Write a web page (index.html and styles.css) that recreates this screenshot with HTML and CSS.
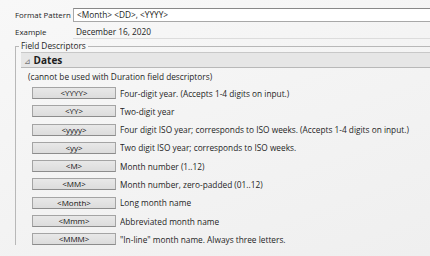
FILE: index.html
```html
<!DOCTYPE html>
<html>
<head>
    <title>Format Pattern</title>
    <meta name="viewport" content="width=device-width, initial-scale=1">
    <link rel="stylesheet" href="styles.css">
</head>
<body>
    <div class="top">
        <div class="label">Format Pattern</div>
        <div class="input">&lt;Month&gt; &lt;DD&gt;, &lt;YYYY&gt;</div>
        <div class="label">Example</div>
        <div class="example">December 16, 2020</div>
    </div>

    <fieldset>
        <legend>Field Descriptors</legend>
        <div class="head"><span class="tri">&#8895;</span> Dates</div>
        <div class="note">(cannot be used with Duration field descriptors)</div>
        <div id="rows">
            <div class="btn">&lt;YYYY&gt;</div><div>Four-digit year. (Accepts 1-4 digits on input.)</div>
            <div class="btn">&lt;YY&gt;</div><div>Two-digit year</div>
            <div class="btn">&lt;yyyy&gt;</div><div>Four digit ISO year; corresponds to ISO weeks. (Accepts 1-4 digits on input.)</div>
            <div class="btn">&lt;yy&gt;</div><div>Two digit ISO year; corresponds to ISO weeks.</div>
            <div class="btn">&lt;M&gt;</div><div>Month number (1..12)</div>
            <div class="btn">&lt;MM&gt;</div><div>Month number, zero-padded (01..12)</div>
            <div class="btn">&lt;Month&gt;</div><div>Long month name</div>
            <div class="btn">&lt;Mmm&gt;</div><div>Abbreviated month name</div>
            <div class="btn">&lt;MMM&gt;</div><div>"In-line" month name. Always three letters.</div>
        </div>
    </fieldset>
</body>
</html>
```
FILE: styles.css
```css
html { background: #f3f3f3; }
body { font-family: 'Open Sans', 'Noto Sans', sans-serif; font-size: 8.3px; color: #1e1e1e; margin: 0; height: 256px; overflow: hidden; background: linear-gradient(160deg, #f8f8f8, #efefef); }
.top { display: grid; grid-template-columns: 58px 1fr; row-gap: 3px; align-items: center; padding: 8px 0 0 15px; }
.label { line-height: 14px; white-space: nowrap; font-size: 7.9px; }
.input { background: #fff; border: 1px solid #a8a8a8; border-top-color: #888; border-right: none; height: 12px; line-height: 12px; padding-left: 3px; }
.example { height: 13px; line-height: 13px; padding-left: 3px; border-bottom: 1px solid #dcdcdc; }
fieldset { margin: 2px 0 0 15px; padding: 0 0 0 5px; border: 1px solid #b8b8b8; border-right: none; border-bottom: none; }
legend { padding: 0 2px; margin-left: -2px; line-height: 10px; }
.head { background: #e6e6e6; border-top: 1px solid #c8c8c8; border-bottom: 1px solid #b8b8b8; height: 14px; line-height: 14px; padding-left: 3px; font-size: 10px; font-weight: 700; margin-top: 1px; }
.tri { font-size: 8px; font-weight: 400; color: #777; }
.note { padding: 2px 0 0 7px; line-height: 14px; }
#rows { display: grid; grid-template-columns: 84px 1fr; column-gap: 4px; row-gap: 6.3px; padding: 3px 0 0 11px; align-items: center; }
.btn { background: linear-gradient(#e8e8e8, #dcdcdc); border: 1px solid #a4a4a4; border-bottom-color: #8c8c8c; height: 10px; line-height: 10px; text-align: center; font-size: 8px; color: #111; }
#rows > div { white-space: nowrap; overflow: hidden; }
```
